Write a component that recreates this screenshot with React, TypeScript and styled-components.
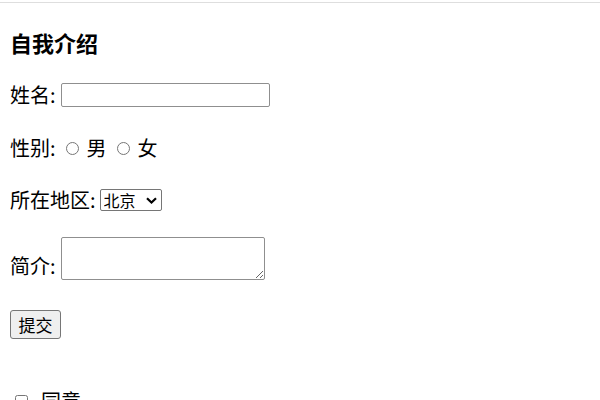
import React from 'react';
import styled, { createGlobalStyle } from 'styled-components';

const GlobalStyle = createGlobalStyle`
  html, body {
    margin: 0;
    background: #ffffff;
  }
  body {
    font-family: "Noto Sans CJK SC", "Noto Sans", "Liberation Sans", sans-serif;
    color: #000000;
  }
`;

const Page = styled.div`
  margin-top: 2px;
  border-top: 1px solid #dedede;
  padding: 0 10px;
  height: 397px;
  overflow: hidden;
`;

const Title = styled.h3`
  margin: 24px 0 0;
  font-size: 22px;
  line-height: 30px;
  font-weight: 700;
`;

const Form = styled.form`
  display: flex;
  flex-direction: column;
`;

const Field = styled.div<{ $space: number; $bottom?: boolean }>`
  display: flex;
  align-items: ${(p) => (p.$bottom ? 'flex-end' : 'center')};
  min-height: 28px;
  margin-top: ${(p) => p.$space}px;
  font-size: 20px;
  line-height: 28px;
`;

const Label = styled.label<{ $gap?: number }>`
  margin-right: ${(p) => p.$gap ?? 5}px;
  white-space: nowrap;
`;

const TextInput = styled.input`
  box-sizing: border-box;
  width: 209px;
  height: 24px;
  margin: 0;
  border: 1px solid #8f8f8f;
  border-radius: 2px;
  background: #fff;
`;

const Choice = styled.label`
  display: inline-flex;
  align-items: center;
  margin-right: 5px;
`;

const Radio = styled.input`
  width: 13px;
  height: 13px;
  margin: 0 8px 0 5px;
`;

const SelectBox = styled.span`
  position: relative;
  display: inline-flex;
`;

const Select = styled.select`
  box-sizing: border-box;
  width: 62px;
  height: 22px;
  padding: 0 0 0 3px;
  border: 1px solid #767676;
  border-radius: 2px;
  background: #fff;
  color: #000;
  font-family: inherit;
  font-size: 16px;
  line-height: 20px;
  appearance: none;
  -webkit-appearance: none;
`;

const Chevron = styled.svg`
  position: absolute;
  right: 5px;
  top: 8px;
  width: 11px;
  height: 7px;
  pointer-events: none;
`;

const TextArea = styled.textarea`
  box-sizing: border-box;
  width: 204px;
  height: 43px;
  margin: 0;
  border: 1px solid #8f8f8f;
  border-radius: 2px;
  font-family: inherit;
`;

const Submit = styled.button`
  box-sizing: border-box;
  width: 51px;
  height: 29px;
  padding: 0;
  border: 1px solid #767676;
  border-radius: 3px;
  background: #efefef;
  color: #000;
  font-family: inherit;
  font-size: 17px;
  line-height: 27px;
`;

const CheckRow = styled.label`
  display: flex;
  align-items: center;
  font-size: 20px;
  line-height: 28px;
  margin-top: 48px;
`;

const Checkbox = styled.input`
  width: 13px;
  height: 13px;
  margin: 0 13px 0 5px;
`;

export default function App() {
  return (
    <>
      <GlobalStyle />
      <Page>
        <Title>自我介绍</Title>
        <Form onSubmit={(e) => e.preventDefault()}>
          <Field $space={24}>
            <Label>姓名:</Label>
            <TextInput type="text" />
          </Field>
          <Field $space={25}>
            <Label>性别:</Label>
            <Choice>
              <Radio type="radio" name="sex" />男
            </Choice>
            <Choice>
              <Radio type="radio" name="sex" />女
            </Choice>
          </Field>
          <Field $space={24}>
            <Label $gap={4}>所在地区:</Label>
            <SelectBox>
              <Select defaultValue="bj">
                <option value="bj">北京</option>
                <option value="sh">上海</option>
                <option value="gz">广州</option>
              </Select>
              <Chevron viewBox="0 0 11 7">
                <path d="M1 1.2 L5.5 5.5 L10 1.2" fill="none" stroke="#000" strokeWidth="2.2" />
              </Chevron>
            </SelectBox>
          </Field>
          <Field $space={23} $bottom>
            <Label>简介:</Label>
            <TextArea />
          </Field>
          <Field $space={30}>
            <Submit type="submit">提交</Submit>
          </Field>
        </Form>
        <CheckRow>
          <Checkbox type="checkbox" />同意
        </CheckRow>
      </Page>
    </>
  );
}
